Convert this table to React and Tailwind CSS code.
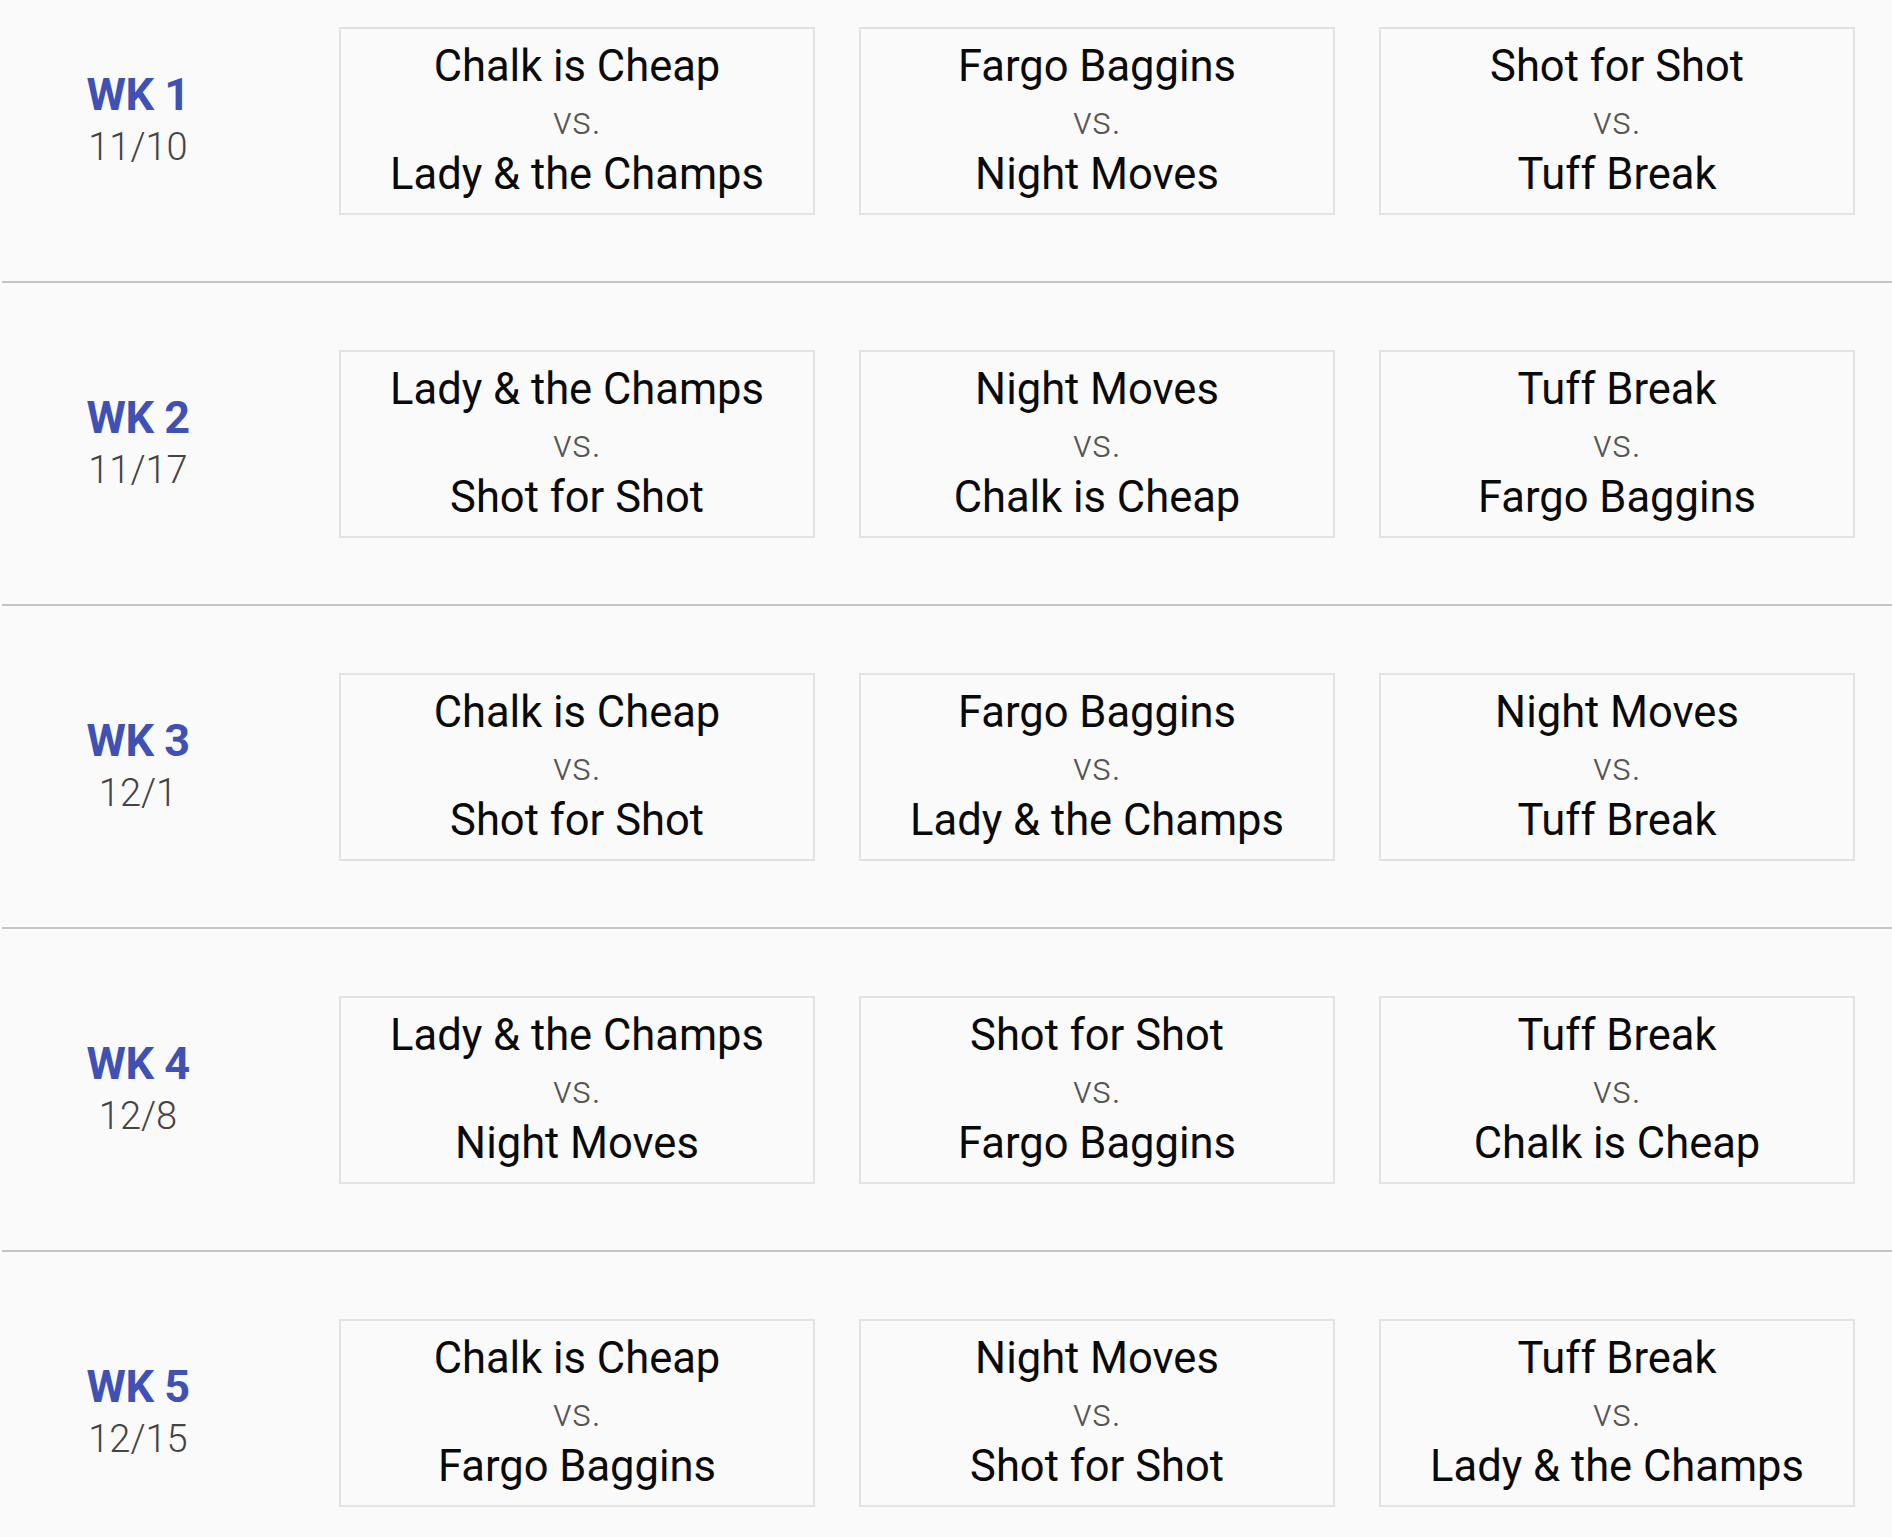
import React from "react";

const weeks = [
    {
        week: "WK 1",
        date: "11/10",
        games: [
            ["Chalk is Cheap", "Lady & the Champs"],
            ["Fargo Baggins", "Night Moves"],
            ["Shot for Shot", "Tuff Break"],
        ],
    },
    {
        week: "WK 2",
        date: "11/17",
        games: [
            ["Lady & the Champs", "Shot for Shot"],
            ["Night Moves", "Chalk is Cheap"],
            ["Tuff Break", "Fargo Baggins"],
        ],
    },
    {
        week: "WK 3",
        date: "12/1",
        games: [
            ["Chalk is Cheap", "Shot for Shot"],
            ["Fargo Baggins", "Lady & the Champs"],
            ["Night Moves", "Tuff Break"],
        ],
    },
    {
        week: "WK 4",
        date: "12/8",
        games: [
            ["Lady & the Champs", "Night Moves"],
            ["Shot for Shot", "Fargo Baggins"],
            ["Tuff Break", "Chalk is Cheap"],
        ],
    },
    {
        week: "WK 5",
        date: "12/15",
        games: [
            ["Chalk is Cheap", "Fargo Baggins"],
            ["Night Moves", "Shot for Shot"],
            ["Tuff Break", "Lady & the Champs"],
        ],
    },
];

const Matchup = ({ home, away }) => (
    <div className="h-[188px] border-2 border-[#e3e3e3] bg-[#fafafa] py-3 flex flex-col items-center text-center">
        <div className="text-[43.5px] leading-[52px] text-[#0a0a0a] whitespace-nowrap">{home}</div>
        <div className="text-[39px] leading-[56px] font-light text-[#555]">vs.</div>
        <div className="text-[43.5px] leading-[52px] text-[#0a0a0a] whitespace-nowrap">{away}</div>
    </div>
);

const WeekRow = ({ week, date, games, first }) => (
    <div className={`flex items-center pr-[37px] pb-[66px] ${first ? "pt-[27px]" : "pt-[67px]"}`}>
        {/* Week label */}
        <div className="w-[276px] shrink-0 flex flex-col items-center">
            <div className="text-[45px] leading-[52px] font-bold text-[#3f51b5] tracking-[-0.5px]">{week}</div>
            <div className="text-[38px] leading-[52px] font-light text-[#444]">{date}</div>
        </div>
        {/* Games */}
        <div className="ml-[63px] flex-1 grid grid-cols-3 gap-x-[44px]">
            {games.map(([home, away], i) => (
                <Matchup key={i} home={home} away={away} />
            ))}
        </div>
    </div>
);

const App = () => (
    <div className="min-h-screen bg-[#fafafa] overflow-hidden" style={{ fontFamily: "Roboto, 'Liberation Sans', sans-serif" }}>
        {weeks.map((w, i) => (
            <React.Fragment key={w.week}>
                {i > 0 && <div className="ml-[2px] h-[2px] bg-[#c4c4c4]" />}
                <WeekRow {...w} first={i === 0} />
            </React.Fragment>
        ))}
    </div>
);

export default App;
